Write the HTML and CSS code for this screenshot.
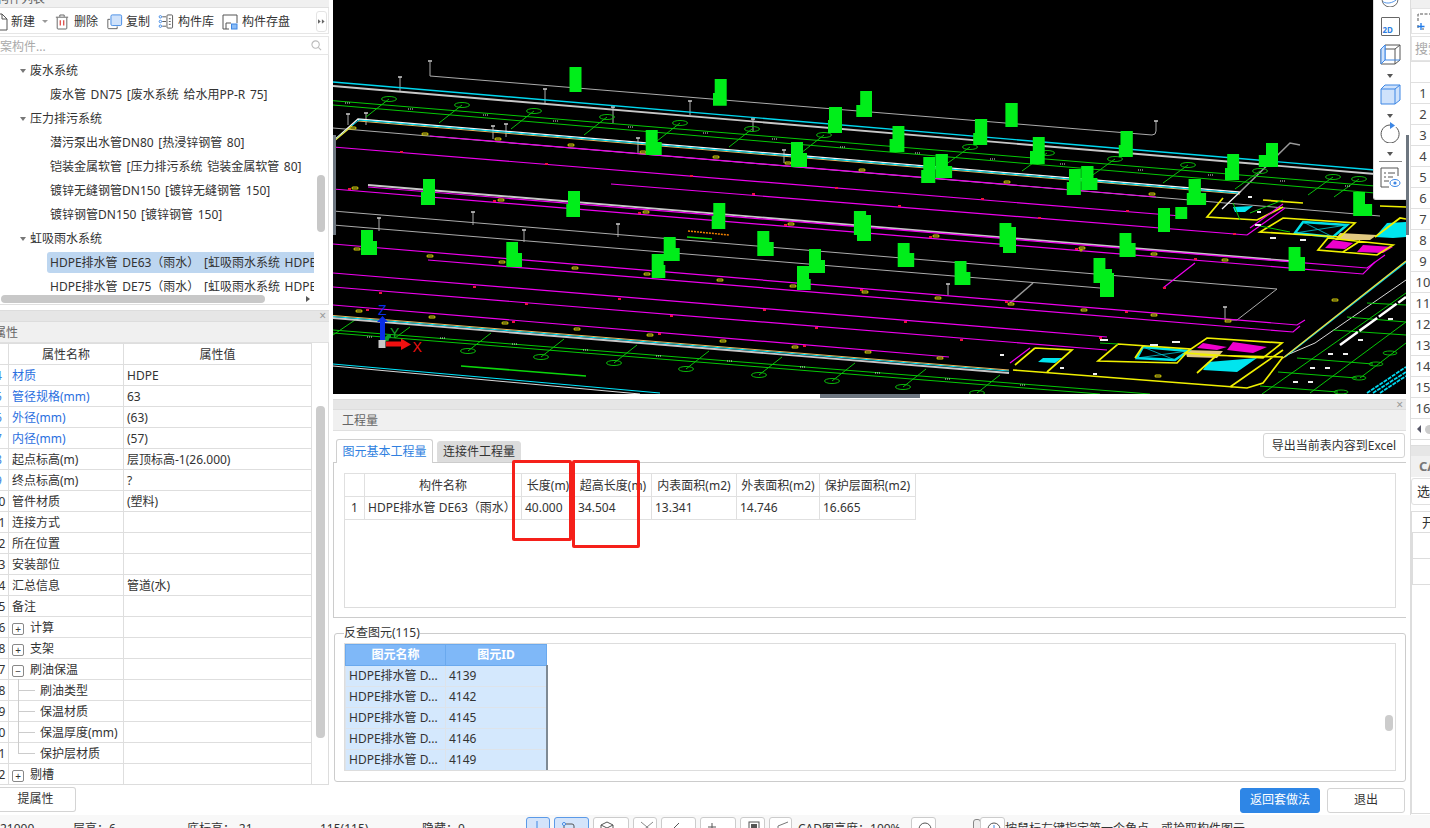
FILE: index.html
```html
<!DOCTYPE html>
<html lang="zh-CN">
<head>
<meta charset="utf-8">
<title>工程量</title>
<link rel="stylesheet" href="styles.css">
</head>
<body>
<div class="app">
  <section class="left">
    <div class="cut-head"><span>构件列表</span></div>
    <div class="tools">
      <svg class="ic ic-file" viewBox="0 0 18 18"><path d="M3 1h8l5 5v11H3z M11 1v5h5" fill="none" stroke="#555"/></svg>
      <span class="tool-t">新建</span><span class="mini-caret"></span>
      <svg class="ic ic-trash" viewBox="0 0 16 18"><path d="M1 3.500h14M5.500 3V1h5v2M2.500 4v12a1 1 0 0 0 1 1h9a1 1 0 0 0 1-1V4" fill="none" stroke="#555"/><path d="M6 7v6M10 7v6" stroke="#d9322e" stroke-width="1.300"/></svg>
      <span class="tool-t">删除</span>
      <svg class="ic ic-copy" viewBox="0 0 18 18"><path d="M4 6H1.500v9.500a1 1 0 0 0 1 1H12V14" fill="none" stroke="#555"/><rect x="5" y="1" width="12" height="12" rx="1.500" fill="#cfe2fb" stroke="#3c86e4"/></svg>
      <span class="tool-t">复制</span>
      <svg class="ic ic-lib" viewBox="0 0 16 16"><rect x="9" y="1" width="6" height="14" rx="1" fill="none" stroke="#555"/><path d="M11 5h2M11 8h2M11 11h2" stroke="#555"/><circle cx="2" cy="3" r="1.300" fill="none" stroke="#3c86e4"/><circle cx="2" cy="8" r="1.300" fill="none" stroke="#3c86e4"/><circle cx="2" cy="13" r="1.300" fill="none" stroke="#3c86e4"/><path d="M4 3h4M4 8h4M4 13h4" stroke="#555"/></svg>
      <span class="tool-t">构件库</span>
      <svg class="ic ic-save" viewBox="0 0 16 16"><path d="M7 15H1V1h14v8" fill="none" stroke="#555"/><path d="M4 15V9h5" fill="none" stroke="#555"/><rect x="9.500" y="10" width="5.500" height="5" fill="#8bbcf5" stroke="#3c86e4"/></svg>
      <span class="tool-t">构件存盘</span>
      <span class="more"><svg viewBox="0 0 9 8" class="more-g"><path d="M0 1l3.500 3L0 7zM5 1l3.500 3L5 7z" fill="#666"/></svg></span>
    </div>
    <div class="search">
      <span>案构件...</span>
      <svg class="glass" viewBox="0 0 12 12"><circle cx="5" cy="5" r="4" fill="none" stroke="#bbb" stroke-width="1.200"/><path d="M8 8l3 3" stroke="#bbb" stroke-width="1.200"/></svg>
    </div>
    <div class="tree">
      <div class="rows">
        <div class="cat"><i class="caret"></i>废水系统</div>
        <div class="leaf"><span>废水管 DN75 [废水系统 给水用PP-R 75]</span></div>
        <div class="cat"><i class="caret"></i>压力排污系统</div>
        <div class="leaf"><span>潜污泵出水管DN80 [热浸锌钢管 80]</span></div>
        <div class="leaf"><span>铠装金属软管 [压力排污系统 铠装金属软管 80]</span></div>
        <div class="leaf"><span>镀锌无缝钢管DN150 [镀锌无缝钢管 150]</span></div>
        <div class="leaf"><span>镀锌钢管DN150 [镀锌钢管 150]</span></div>
        <div class="cat"><i class="caret"></i>虹吸雨水系统</div>
        <div class="leaf sel"><span>HDPE排水管 DE63（雨水） [虹吸雨水系统 HDPE排水管 63]</span></div>
        <div class="leaf"><span>HDPE排水管 DE75（雨水） [虹吸雨水系统 HDPE排水管 75]</span></div>
      </div>
      <div class="vtrack"><b></b></div>
      <div class="htrack"><b></b><i class="h-arrow"></i></div>
    </div>
    <div class="bar-x"><span class="x">×</span></div>
    <div class="title-row"><span class="cut-title">属性</span></div>
    <div class="attrs">
      <table class="attr-table">
        <colgroup><col class="c-num"><col class="c-name"><col class="c-val"></colgroup>
        <thead><tr><th></th><th>属性名称</th><th>属性值</th></tr></thead>
        <tbody>
          <tr class="blue"><td class="n">4</td><td>材质</td><td>HDPE</td></tr>
          <tr class="blue"><td class="n">5</td><td>管径规格(mm)</td><td>63</td></tr>
          <tr class="blue"><td class="n">6</td><td>外径(mm)</td><td>(63)</td></tr>
          <tr class="blue"><td class="n">7</td><td>内径(mm)</td><td>(57)</td></tr>
          <tr class="num-blue"><td class="n">8</td><td>起点标高(m)</td><td>层顶标高-1(26.000)</td></tr>
          <tr class="num-blue"><td class="n">9</td><td>终点标高(m)</td><td>?</td></tr>
          <tr><td class="n">10</td><td>管件材质</td><td>(塑料)</td></tr>
          <tr><td class="n">11</td><td>连接方式</td><td></td></tr>
          <tr><td class="n">12</td><td>所在位置</td><td></td></tr>
          <tr><td class="n">13</td><td>安装部位</td><td></td></tr>
          <tr><td class="n">14</td><td>汇总信息</td><td>管道(水)</td></tr>
          <tr><td class="n">15</td><td>备注</td><td></td></tr>
          <tr><td class="n">16</td><td><i class="exp">+</i>计算</td><td></td></tr>
          <tr><td class="n">18</td><td><i class="exp">+</i>支架</td><td></td></tr>
          <tr><td class="n">27</td><td><i class="exp">−</i>刷油保温</td><td></td></tr>
          <tr><td class="n">28</td><td class="kid">刷油类型</td><td></td></tr>
          <tr><td class="n">29</td><td class="kid">保温材质</td><td></td></tr>
          <tr><td class="n">30</td><td class="kid">保温厚度(mm)</td><td></td></tr>
          <tr><td class="n">31</td><td class="kid last">保护层材质</td><td></td></tr>
          <tr><td class="n">32</td><td><i class="exp">+</i>剔槽</td><td></td></tr>
        </tbody>
      </table>
      <div class="attr-track"><b></b></div>
    </div>
    <div class="attr-foot"><button class="btn btn-prop">提属性</button></div>
  </section>

  <section class="center">
    <div class="viewport">
      <svg class="cad" viewBox="333 0 1073 394" xmlns="http://www.w3.org/2000/svg">
        <defs>
          <path id="ovals" d="M353 188h4M499 200h4M644 212h4M789 224h4M423 134h4M496 139h4M569 145h4M641 152h4M714 157h4M786 163h4M351 128h4M355 249h4M428 256h4M500 262h4M573 268h4M645 274h4M718 280h4M791 286h4M357 311h4M430 317h4M503 323h4M575 329h4M648 335h4M721 341h4M793 347h4M860 170h4M1005 182h4M1150 194h4M1080 248h4M1152 254h4M1223 260h4M1081 250h0M934 236h4M863 292h4M1009 304h4M1082 310h4M1152 315h4M1226 321h4M936 298h4M866 352h4M938 358h4M1333 300h4M1156 376h4"/>
        </defs>
        <rect x="333" y="0" width="1073" height="394" fill="#000"/>
        <g class="gr">
          <path d="M430 62V76L1152 135Q1156 135 1156 131V121"/>
          <path d="M400 77V91M545 89V103M690 101V115M613 107V123M348 114V125M366 113V125M493 126V139M506 124V137M638 138V153M753 119V132M784 150V163M379 218V231M473 212V225M524 230V242M618 224V237M948 284V295M1225 307V320"/>
          <path d="M333 128L1380 216"/>
          <path d="M333 211L1277 289L1237 320H1225"/>
          <path d="M333 225L1100 288"/>
          <path class="thick" d="M1033 283L1010 303"/>
          <path class="thick" d="M1240 192L1290 143L1300 145"/>
        </g>
        <path class="stem-cap" d="M428 61h4M398 77h4M543 89h4M688 101h4M611 107h4M346 114h4M364 113h4M491 126h4M504 124h4M636 138h4M751 119h4M782 150h4M377 218h4M471 212h4M522 230h4M616 224h4M946 284h4M1223 307h4M1154 121h4"/>
        <path class="cy2" d="M333 82L1375 170"/>
        <path class="gr2" d="M333 86L1375 174"/>
        <path class="gn" d="M333 100.700L1375 186M333 105L1375 193M333 330L1150 394M333 333L1100 394"/>
        <g class="axis">
          <ellipse cx="389" cy="99" rx="7.500" ry="2.500"/><ellipse cx="462" cy="105" rx="7.500" ry="2.500"/><ellipse cx="534" cy="111" rx="7.500" ry="2.500"/><ellipse cx="607" cy="117" rx="7.500" ry="2.500"/><ellipse cx="680" cy="123" rx="7.500" ry="2.500"/><ellipse cx="752" cy="129" rx="7.500" ry="2.500"/><ellipse cx="824" cy="135" rx="7.500" ry="2.500"/><ellipse cx="970" cy="147" rx="7.500" ry="2.500"/><ellipse cx="1047" cy="153" rx="7.500" ry="2.500"/><ellipse cx="1115" cy="159" rx="7.500" ry="2.500"/><ellipse cx="1188" cy="165" rx="7.500" ry="2.500"/><ellipse cx="1260" cy="171" rx="7.500" ry="2.500"/><ellipse cx="1333" cy="177" rx="7.500" ry="2.500"/><ellipse cx="1359" cy="179" rx="7.500" ry="2.500"/>
          <ellipse cx="468" cy="351" rx="7.500" ry="2.500"/><ellipse cx="541" cy="357" rx="7.500" ry="2.500"/><ellipse cx="614" cy="363" rx="7.500" ry="2.500"/><ellipse cx="686" cy="369" rx="7.500" ry="2.500"/><ellipse cx="759" cy="375" rx="7.500" ry="2.500"/><ellipse cx="832" cy="381" rx="7.500" ry="2.500"/><ellipse cx="903" cy="387" rx="7.500" ry="2.500"/><ellipse cx="977" cy="393" rx="7.500" ry="2.500"/>
          <path d="M389 99L366 117M462 105L439 123M534 111L511 129M607 117L584 135M680 123L657 141M752 129L729 147M824 135L801 153M970 147L945 165M1047 153L1022 171M1115 159L1090 177M1188 165L1163 183M1260 171L1235 189M1333 177L1308 195M1359 179L1334 197M468 351L491 333M541 357L564 339M614 363L637 345M686 369L709 351M759 375L782 357M832 381L855 363M903 387L926 369M977 393L1000 375M355 320L333 335M410 327L395 338"/>
        </g>
        <path class="gn3" d="M461 366L586 376"/>
        <path class="org" d="M358 121L1240 194"/>
        <path class="wh2" d="M333 141L358 119L1240 192L1222 209"/>
        <path class="cy1" d="M336 139L359 120L1238 193"/>
        <path class="ye1" d="M333 142L352 126"/>
        <path class="mg" d="M430 136L1156 197M333 147L1181 216M611 184L1247 235M333 189L1363 274L1375 262M333 244L1297 325L1305 320M428 260L1293 332L1300 326M333 273L1107 337M333 287L1107 350M333 305L949 357M1163 288L1195 263"/>
        <path class="gr2" d="M368 185L1290 261"/>
        <path class="mg" d="M368 187L1367 268L1385 255"/>
        <path class="gr2" d="M333 318L1009 373"/>
        <path class="cy1" d="M333 316.500L1009 371"/>
        <path class="org" d="M333 315.500L1009 370"/>
        <path class="cy1" d="M333 364L660 393"/>
        <path class="wh1" d="M333 366L640 394"/>
        <path class="tick" d="M345 103h6M408 109h6M483 115h6M553 121h6M628 127h6M703 133h6M772 139h6M840 147h6M915 153h6M990 159h6M1060 164h6M1138 170h6M1208 175h6M1280 181h6M1345 186h6M367 337h6M440 338h6M512 344h6M583 350h6M656 356h6M727 361h6M800 367h6M875 373h6M945 379h6M1020 385h6"/>
        <path class="red" d="M400 152h3M545 164h3M690 176h3M752 194h3M348 189h3M493 201h3M638 213h3M784 225h3M473 287h3M379 293h3M618 299h3M525 304h3M763 310h3M670 316h3M815 328h3M366 310h3M512 322h3M658 334h3M803 346h3M835 188h3M981 199h3M1126 211h3M898 206h3M1038 218h3M1233 234h3M929 237h3M1075 249h3M1194 259h3M860 290h3M1005 302h3M904 322h3M1125 312h3M960 340h3M1099 338h3M1163 288h3"/>
        <use href="#ovals" class="ov"/>
        <use href="#ovals" class="ov2"/>
        <path class="orgt" d="M688 231L729 235"/>
        <path class="gn3" d="M687 237L712 239"/>

        <!-- buildings -->
        <path class="fc" d="M1043 358L1062 358L1055 363L1038 362ZM1208 362L1257 358L1237 372L1203 370ZM1233 207L1253 206L1245 212L1235 212ZM1387 223L1406 222V237L1393 238L1375 237Z"/>
        <path class="fm" d="M1233 342L1267 347L1253 353L1227 350ZM1203 343L1227 347L1217 350L1197 348ZM1333 240L1353 243L1345 249L1325 248ZM1363 245L1393 247L1383 253L1357 252Z"/>
        <path class="ft" d="M1185 350L1223 351L1217 358L1187 357ZM1340 233L1377 235L1370 240L1335 240Z"/>
        <path class="cyb" d="M1143 347L1188 351L1175 360L1137 358ZM1303 222L1347 225L1333 237L1295 233Z"/>
        <path class="cythin" d="M1143 347L1175 360M1188 351L1137 358M1303 222L1333 237M1347 225L1295 233"/>
        <path class="ye2" d="M1035 348L1072 350L1047 372M1035 348L1015 365M1013 370L1247 388L1263 383L1283 357M1118 344L1190 349L1177 363L1098 361ZM1143 346L1135 358M1207 338L1282 343L1263 358L1185 353ZM1200 355L1283 357M1197 373L1217 355M1230 387L1283 350M1223 198L1207 217L1257 220L1283 207M1263 200L1303 203M1283 218L1355 223L1340 237L1260 232ZM1328 238L1393 245L1377 255L1318 250ZM1375 237L1400 218L1406 219M1360 241L1343 252M1406 207L1380 206"/>
        <path class="mg" d="M1010 363L1030 348M1250 228L1283 204M1247 235L1285 208"/>
        <path class="gn" d="M1233 203L1240 220M1250 213L1283 200M1255 225L1290 232M1100 343L1118 344"/>
        <path class="tick2" d="M1100 340h8M1150 345h8M1172 342h8M1255 225h6M1270 238h6M1300 240h6M1000 355h4M1060 368h4M1093 374h4M1257 212h4M1248 197h4"/>
        <path class="wh1" d="M1287 355L1315 343L1406 280"/>
        <path class="cy2" d="M1285 357L1406 262"/>
        <path class="ye1" d="M1283 358L1406 261"/>
        <path class="gn" d="M1333 330L1406 335M1297 358L1373 364M1278 372L1357 378M1260 386L1338 392M1347 317L1406 322M1367 303L1406 305M1406 293L1262 394M1406 322L1310 393M1406 343L1360 378"/>
        <path class="wh3" d="M1340 345L1406 297"/>
        <g class="axis"><ellipse cx="1390" cy="353" rx="7" ry="2"/><ellipse cx="1376" cy="364" rx="7" ry="2"/><ellipse cx="1359" cy="378" rx="7" ry="2"/><ellipse cx="1341" cy="392" rx="7" ry="2"/></g>
        <path class="tick2" d="M1328 354h5M1343 354h5M1310 368h5M1325 368h5M1293 382h5M1308 382h5M1358 340h5M1388 319h5"/>
        <path class="cy3" d="M1367 393L1406 367M1373 393L1406 372M1380 393L1406 376"/>

        <path class="grn" d="M569.500 67H581.500V92H569.500ZM714.700 79H726.700V105.700H713V93H714.700ZM829 107H842V133H828V120H829ZM860.200 91H872V117H856.300V105H860.200ZM1005.400 103H1017.700V127H1005.400ZM892.500 126H904.400V152H889.600V139H892.500ZM974.900 119H987.200V145H973.200V133H974.900ZM1120.500 131H1132.800V157H1118.800V145H1120.500ZM1032.800 137H1044.700V164H1030V151H1032.800ZM1266 143H1278V167H1258.800V155H1266ZM1227.200 154H1239.100V180H1225V168H1227.200ZM923.300 157H935.300V183H921.200V170H923.300ZM935.600 154H947.900V166H952.100V178H935.600ZM1069 169H1080.900V195H1066.800V182H1069ZM1081.200 166H1093.500V178H1097.400V190H1081.200ZM1188.600 179H1200.900V193H1206.100V205H1186.800V193H1188.600ZM1175.300 207H1187.200V219H1175.300ZM1158 208H1170V232H1158ZM1353.200 192H1365V204H1372.100V216H1353.200ZM853.900 211H866.100V215H871V241H857V235H853.900ZM999.500 223H1011.400V227H1016V253H1003V247H999.500ZM1119.500 233H1131.400V243H1135.600V257H1119.500ZM897.700 243H909.600V253H914.200V267H897.700ZM954.600 261H966.500V272H970.400V285H954.600ZM1093.500 258H1105.400V269H1112V273H1114V297H1100V283H1093.500ZM1288.600 247H1300.500V257H1305V271H1288.600ZM423 179H435V205H421V192H423ZM568 191H580V217H566.300V204H568ZM713.300 203H725.300V229H711.700V216H713.300ZM361 230H373V241H377V255H361ZM506.300 242H518V253H522V267H506.300ZM663.700 237H675.700V248H679.700V261H663.700ZM651.700 254H663.700V265H665.300V278H651.700ZM757.300 231H769.300V242H773.700V256H757.300ZM809 249H821V260H825V273H809ZM797 266H809V279H810.700V290H797ZM645.700 130H657.700V142H661.700V155H645.700ZM791 142H803V153H807V167H791Z"/>

        <g class="triad">
          <path d="M382.500 341V321" stroke="#0a2ee6" stroke-width="5"/>
          <path d="M377 322L382.500 316L388 322Z" fill="#0a2ee6"/>
          <path d="M386 344H404" stroke="#f01010" stroke-width="5"/>
          <path d="M401 338.500L411 344.500L401 350Z" fill="#f01010"/>
          <path d="M387 341Q386 336 391 336" stroke="#0ea02a" stroke-width="4" fill="none"/>
          <rect x="378.500" y="340" width="7" height="8" fill="#c8c8c8"/>
          <text class="tz" x="378" y="315">Z</text>
          <text class="ty" x="390" y="338">Y</text>
          <text class="tx" x="412.500" y="352">X</text>
        </g>
      </svg>

      <div class="floatbar">
        <svg class="fb fb-top" viewBox="0 0 20 8"><path d="M1 0a9 8 0 0 0 18 0" fill="none" stroke="#555"/><path d="M2 2c5 3 11 1 15-2" fill="none" stroke="#3c86e4"/></svg>
        <span class="fb-2d">2D</span>
        <svg class="fb fb-c" viewBox="0 0 21 21"><path d="M5 1h15v15l-5 4H1V5zM1 5h14v15M15 5l5-4" fill="none" stroke="#555"/><path d="M5 1v15H1M5 16h15" fill="none" stroke="#3c86e4"/><path d="M1 5v15l4-4V1z" fill="#cfe2fb" stroke="#3c86e4"/></svg>
        <i class="down"></i>
        <svg class="fb fb-c" viewBox="0 0 21 21"><path d="M5 1h15v15l-5 4H1V5z" fill="#cfe2fb" stroke="#3c86e4"/><path d="M1 5h14v15M15 5l5-4" fill="none" stroke="#3c86e4"/></svg>
        <i class="down"></i>
        <svg class="fb fb-c fb-rot" viewBox="0 0 21 21"><path d="M10 3a9 9 0 1 0 6 2.200" fill="none" stroke="#555"/><path d="M10 0l5 3.500L10 7z" fill="#3c86e4"/></svg>
        <i class="down"></i>
        <hr class="fb-sep">
        <svg class="fb fb-c" viewBox="0 0 21 21"><path d="M18 9V1H1v19h8" fill="none" stroke="#555"/><path d="M4 6h2M8 6h7M4 10h2M8 10h5M4 14h5" stroke="#555"/><ellipse cx="15" cy="16" rx="5" ry="3.500" fill="none" stroke="#3c86e4"/><circle cx="15" cy="16" r="1.600" fill="#3c86e4"/></svg>
      </div>
      <span class="split-l"></span>
    </div>
    <div class="split-b"><span class="handle"></span></div>

    <div class="bar-x center-bar"><span class="x">×</span></div>
    <div class="title-row"><span class="title-t">工程量</span></div>

    <div class="tabhead">
      <span class="tab on">图元基本工程量</span>
      <span class="tab off">连接件工程量</span>
      <button class="btn btn-export">导出当前表内容到Excel</button>
    </div>
    <div class="tabpane">
      <div class="qbox">
        <table class="q-table">
          <colgroup><col class="q0"><col class="q1"><col class="q2"><col class="q3"><col class="q4"><col class="q5"><col class="q6"></colgroup>
          <thead><tr><th></th><th>构件名称</th><th>长度(m)</th><th>超高长度(m)</th><th>内表面积(m2)</th><th>外表面积(m2)</th><th>保护层面积(m2)</th></tr></thead>
          <tbody><tr><td class="ctr">1</td><td class="nowrap">HDPE排水管 DE63（雨水）</td><td>40.000</td><td>34.504</td><td>13.341</td><td>14.746</td><td>16.665</td></tr></tbody>
        </table>
      </div>
    </div>

    <fieldset class="lookup">
      <legend>反查图元(115)</legend>
      <div class="lbox">
        <table class="l-table">
          <colgroup><col class="l1"><col class="l2"></colgroup>
          <thead><tr><th>图元名称</th><th>图元ID</th></tr></thead>
          <tbody>
            <tr><td>HDPE排水管 D...</td><td>4139</td></tr>
            <tr><td>HDPE排水管 D...</td><td>4142</td></tr>
            <tr><td>HDPE排水管 D...</td><td>4145</td></tr>
            <tr><td>HDPE排水管 D...</td><td>4146</td></tr>
            <tr><td>HDPE排水管 D...</td><td>4149</td></tr>
          </tbody>
        </table>
        <span class="l-thumb"></span>
      </div>
    </fieldset>

    <div class="actions">
      <button class="btn btn-primary">返回套做法</button>
      <button class="btn btn-exit">退出</button>
    </div>

    <span class="mark mark-a"></span>
    <span class="mark mark-b"></span>
  </section>

  <section class="right">
    <span class="split-r"></span>
    <div class="r-inner">
      <div class="r-cut"></div>
      <div class="r-tools">
        <svg class="r-ic" viewBox="0 0 18 18"><path d="M1 8V1h14v7M1 12v3M5 16h2" fill="none" stroke="#555" stroke-dasharray="3 1.500"/><path d="M4 10v7M0.500 13.500h7" stroke="#1f7ae8" stroke-width="1.300"/></svg>
      </div>
      <div class="r-search">搜索</div>
      <div class="r-table">
        <div class="r-h"></div>
        <div>1</div><div>2</div><div>3</div><div>4</div><div>5</div><div>6</div><div>7</div><div>8</div><div>9</div><div>10</div><div>11</div><div>12</div><div>13</div><div>14</div><div>15</div><div>16</div>
        <div class="r-scroll"><i class="l-arrow"></i><b></b></div>
      </div>
      <div class="r-bar"></div>
      <div class="r-title">CAD</div>
      <div class="r-sel">选择</div>
      <div class="r-list">
        <div class="r-lh">开关</div>
        <div class="r-lr"><i></i></div>
        <div class="r-lr"><i></i></div>
      </div>
    </div>
  </section>

  <footer class="status">
    <div class="st-info">
      <span class="s1">21000</span><span class="s2">层高：6</span><span class="s3">底标高：-21</span><span class="s4">115(115)</span><span class="s5">隐藏：0</span>
    </div>
    <div class="st-btns">
      <span class="sb w24 act"><svg viewBox="0 0 12 12"><path d="M3 0v11h7" fill="none" stroke="#3c86e4"/></svg></span>
      <span class="sb w35 act"><svg viewBox="0 0 14 12"><rect x="3" y="3" width="10" height="9" rx="2" fill="none" stroke="#555"/><circle cx="3" cy="3" r="1.500" fill="#fff" stroke="#3c86e4"/></svg></span>
      <span class="sb w36"><svg viewBox="0 0 14 12"><path d="M7 1l6 3v8H1V4zM1 4l6 3 6-3M7 7v5" fill="none" stroke="#555"/></svg></span>
      <span class="sb w24"><svg viewBox="0 0 14 12"><path d="M1 1l12 10M13 1L1 11" fill="none" stroke="#888"/></svg></span>
      <span class="sb w35"><svg viewBox="0 0 14 12"><path d="M2 11L11 2" fill="none" stroke="#555"/></svg></span>
      <span class="sb w36"><svg viewBox="0 0 14 12"><path d="M5 2v8M1 6h8" fill="none" stroke="#555"/></svg></span>
      <span class="sb w25"><svg viewBox="0 0 14 12"><rect x="2" y="1" width="10" height="11" fill="none" stroke="#555"/><rect x="4" y="3" width="6" height="8" fill="#555"/></svg></span>
      <span class="sb w23"><svg viewBox="0 0 14 12"><path d="M2 5V12M2 5l10-4" fill="none" stroke="#777"/></svg></span>
      <span class="st-text lum">CAD图亮度：100%</span>
      <span class="sb w25 rnd"><svg viewBox="0 0 14 12"><circle cx="7" cy="8" r="6" fill="none" stroke="#555"/></svg></span>
      <span class="slider"></span>
      <span class="sb w25 tip"><svg viewBox="0 0 14 12"><circle cx="7" cy="8" r="6" fill="none" stroke="#555"/><path d="M7 4v5" stroke="#3c86e4"/></svg></span>
      <span class="st-text hint">按鼠标左键指定第一个角点，或拾取构件图元</span>
    </div>
  </footer>
</div>
</body>
</html>
```

FILE: styles.css
```css
* { box-sizing: border-box; }
html, body { margin: 0; padding: 0; background: #fff; }
body { font: 12px/1.2 "Noto Sans", "Noto Sans CJK SC", sans-serif; color: #333; }
.app {
  width: 1430px; height: 828px; overflow: hidden; position: relative;
  display: grid; grid-template-columns: 333px 1073px 24px; grid-template-rows: 815px 13px;
}

/* ---------- left ---------- */
.left { width: 329px; display: flex; flex-direction: column; overflow: hidden; }
.cut-head { height: 8px; background: #f0f0f0; border-bottom: 1px solid #e0e0e0; overflow: hidden; color: #666; }
.cut-head span { display: block; margin: -9px 0 0 -3px; line-height: 16px; }
.tools { height: 26px; padding-top: 2px; display: flex; align-items: center; border-bottom: 1px solid #e6e6e6; border-right: 1px solid #e6e6e6; position: relative; }
.tool-t { white-space: nowrap; padding-top: 2px; }
.ic { flex: none; display: block; }
.ic-file { width: 18px; height: 18px; margin-left: -9px; margin-right: 2px; }
.mini-caret { width: 0; height: 0; border: 3px solid transparent; border-top-color: #999; border-bottom: 0; margin: 0 7px 0 7px; }
.ic-trash { width: 14px; height: 16px; margin-right: 5px; }
.ic-copy { width: 17px; height: 16px; margin: 0 3px 0 8px; }
.ic-lib { width: 16px; height: 15px; margin: 0 4px 0 8px; }
.ic-save { width: 16px; height: 16px; margin: 0 4px 0 8px; }
.more { position: absolute; left: 316px; top: 3px; width: 11px; height: 21px; border: 1px solid #e4e4e4; border-radius: 3px; display: flex; align-items: center; justify-content: center; }
.more-g { width: 7px; height: 7px; }
.search { margin-top: 2px; height: 19px; padding-top: 3px; border: 1px solid #e6e6e6; border-left: 0; display: flex; align-items: center; justify-content: space-between; padding-right: 6px; color: #aaa; }
.glass { width: 11px; height: 11px; margin-top: -3px; }
.tree { height: 250px; border: 1px solid #e0e0e0; border-left: 0; border-top: 0; position: relative; display: grid; grid-template-columns: 314px 1fr; grid-template-rows: 237px 13px; }
.rows { overflow: hidden; padding-top: 3px; }
.cat, .leaf { height: 24px; display: flex; align-items: center; white-space: nowrap; }
.cat { padding: 2px 0 0 20px; }
.caret { width: 0; height: 0; border: 3.500px solid transparent; border-top: 4px solid #777; border-bottom: 0; margin-right: 4px; }
.leaf { padding-left: 47px; overflow: hidden; word-spacing: 1.500px; }
.leaf span { padding-left: 3px; line-height: 21px; height: 21px; display: block; flex: 1 0 auto; }
.leaf.sel span { background: #bdd6f0; border-radius: 3px 0 0 3px; }
.vtrack { padding: 120px 0 0 3px; }
.vtrack b { display: block; width: 8px; height: 57px; background: #c8c8c8; border-radius: 4px; }
.htrack { grid-column: 1 / 3; display: flex; align-items: center; padding: 0 0 0 1px; position: relative; }
.htrack b { display: block; width: 264px; height: 8px; background: #c8c8c8; border-radius: 4px; }
.h-arrow { width: 0; height: 0; border: 3.500px solid transparent; border-left: 4px solid #555; border-right: 0; margin-left: 41px; }
.bar-x { height: 12px; margin-top: 5px; background: #e6e6e6; border-top: 1px solid #ddd; border-bottom: 1px solid #ddd; position: relative; display: flex; justify-content: flex-end; }
.x { color: #999; font-size: 12px; line-height: 10px; padding-right: 3px; }
.title-row { height: 21px; padding-top: 2px; background: #f0f0f0; border-bottom: 1px solid #e0e0e0; display: flex; align-items: center; color: #666; flex: none; }
.cut-title { margin-left: -6px; }
.attrs { height: 442px; display: flex; overflow: hidden; border-bottom: 1px solid #ddd; border-right: 1px solid #ddd; }
.attr-table { flex: none; width: 323px; margin-left: -12px; border-collapse: collapse; table-layout: fixed; align-self: flex-start; }
.c-num { width: 20px; } .c-name { width: 115px; } .c-val { width: 188px; }
.attr-table th, .attr-table td { height: 21px; padding: 2px 0 0 3px; border: 1px solid #dedede; font-weight: 400; white-space: nowrap; position: relative; line-height: 16px; }
.attr-table th { text-align: center; padding: 2px 0 0; }
.attr-table td.n { padding: 2px 0 0; text-align: center; }
.blue td:nth-child(2) { color: #2b6fe0; }
.blue td.n, .num-blue td.n { color: #3c86e4; }
.exp { display: inline-block; width: 12px; height: 12px; border: 1px solid #888; border-radius: 2px; margin: 0 6px 0 0; font-style: normal; font-size: 10px; line-height: 10px; text-align: center; vertical-align: -1px; }
.attr-table td.kid { padding-left: 31px; }
.kid::before { content: ""; position: absolute; left: 9px; top: -1px; bottom: -1px; width: 0; border-left: 1px solid #ccc; }
.kid.last::before { bottom: 10px; }
.kid::after { content: ""; position: absolute; left: 9px; top: 10px; width: 17px; border-top: 1px solid #ccc; }
.attr-track { width: 16px; padding: 63px 0 0 4px; flex: 1; }
.attr-track b { display: block; width: 9px; height: 332px; background: #ccc; border-radius: 4px; }
.attr-foot { margin-top: 2px; }
.btn { font: inherit; color: #333; background: #fff; border: 1px solid #d4d4d4; border-radius: 3px; padding: 0; cursor: default; }
.btn-prop { width: 76px; height: 25px; display: block; border-left: 0; border-radius: 0 3px 3px 0; padding-right: 4px; }

/* ---------- center ---------- */
.center { position: relative; display: flex; flex-direction: column; overflow: hidden; width: 1073px; grid-column: 2; grid-row: 1; }
.viewport { height: 394px; position: relative; flex: none; }
.cad { display: block; width: 1073px; height: 394px; }
.gr, .gn, .mg, .cy1, .cy2, .cy3, .gr2, .wh1, .wh2, .wh3, .ye1, .ye2, .org, .orgt, .gn3, .cyb, .cythin { fill: none; }
.gr path { fill: none; stroke: #ababab; stroke-width: 1; }
.gr path.thick { stroke-width: 1.500; stroke: #999; }
.stem-cap { stroke: #ccc; stroke-width: 1.500; fill: none; }
.cy1 { stroke: #00e8ff; stroke-width: 1; }
.cy2 { stroke: #00d8f0; stroke-width: 1.400; }
.cy3 { stroke: #00d8f0; stroke-width: 1.800; stroke-dasharray: 4 1; }
.gr2 { stroke: #c8c8c8; stroke-width: 1.900; }
.gn { stroke: #06c806; stroke-width: 1; }
.gn3 { stroke: #0bd80b; stroke-width: 1.600; }
.axis ellipse { fill: none; stroke: #0bb80b; stroke-width: 1; }
.axis path { fill: none; stroke: #0bc00b; stroke-width: 1; }
.mg { stroke: #ee00ee; stroke-width: 1.200; }
.org { stroke: #e8b860; stroke-width: 1; }
.orgt { stroke: #f08000; stroke-width: 1.500; stroke-dasharray: 2 1; }
.wh1 { stroke: #d8d8d8; stroke-width: 1; }
.wh2 { stroke: #f4f4f4; stroke-width: 1.300; }
.wh3 { stroke: #fff; stroke-width: 2.500; stroke-dasharray: 22 2; }
.ye1 { stroke: #f0e040; stroke-width: 1.300; }
.ye2 { stroke: #f0f000; stroke-width: 1.700; }
.fc { fill: #00e5ee; }
.fm { fill: #ee00cc; }
.ft { fill: #e0c880; }
.cyb { stroke: #00dfe8; stroke-width: 2.500; }
.cythin { stroke: #00c8d8; stroke-width: 0.800; }
.tick { stroke: #dcdcdc; stroke-width: 1.200; stroke-dasharray: 1 1; fill: none; }
.tick2 { stroke: #f0f0f0; stroke-width: 2; fill: none; }
.red { stroke: #f01040; stroke-width: 1.800; fill: none; }
.ov { stroke: #d8d000; stroke-width: 3; stroke-linecap: round; fill: none; }
.ov2 { stroke: #222; stroke-width: 1; stroke-linecap: round; fill: none; }
.grn { fill: #00ee1a; }
.triad text { font: 14px "Liberation Sans", sans-serif; }
.tz { fill: #0a2ee6; } .ty { fill: #19a52f; } .tx { fill: #f01010; }

.floatbar { position: absolute; right: 0; top: 0; width: 33px; height: 200px; background: #fff; border-radius: 0 0 0 3px; border-bottom: 1px solid #ddd; border-left: 1px solid #ddd; display: flex; flex-direction: column; align-items: center; }
.fb { display: block; flex: none; }
.fb-top { width: 20px; height: 7px; }
.fb-2d { width: 19px; height: 19px; margin-top: 10px; border: 1px solid #666; border-radius: 1px; color: #2f7fe0; font-size: 8px; font-weight: 700; line-height: 10px; padding-top: 7px; padding-left: 1px; }
.fb-c { width: 21px; height: 21px; }
.floatbar .fb-2d + .fb-c { margin-top: 8px; }
.fb-rot { margin-top: -2px; }
.down { width: 0; height: 0; border: 3.500px solid transparent; border-top: 4px solid #555; border-bottom: 0; margin: 9px 0 6px; flex: none; }
.fb-sep { width: 23px; margin: -1px 0 5px; border: 0; border-top: 1px solid #888; flex: none; }
.split-l { position: absolute; left: 0; top: 135px; width: 3px; height: 100px; background: #6d7680; }
.split-b { height: 4px; flex: none; position: relative; display: flex; justify-content: center; }
.handle { width: 100px; height: 4px; background: #6d7680; }
.center-bar { margin-top: 1px; height: 11px; flex: none; }
.title-t { margin-left: 9px; }
.tabhead { height: 31px; flex: none; position: relative; display: flex; align-items: flex-end; padding-left: 3px; gap: 4px; }
.tab { height: 23px; display: flex; align-items: center; justify-content: center; border-radius: 3px 3px 0 0; padding-top: 2px; }
.tab.on { width: 97px; color: #2f7fe0; border: 1px solid #d0d0d0; border-bottom: 0; background: #fff; position: relative; z-index: 1; margin-bottom: -1px; height: 24px; }
.tab.off { width: 84px; background: #dcdcdc; border: 1px solid #ddd; height: 21px; }
.btn-export { position: absolute; right: 1px; top: 2px; width: 142px; height: 25px; padding-top: 1px; }
.tabpane { height: 156px; flex: none; border: 1px solid #ccc; border-right: 0; padding: 10px 10px 0 10px; width: 1073px; }
.qbox { height: 135px; border: 1px solid #ddd; width: 1052px; }
.q-table { border-collapse: collapse; table-layout: fixed; width: 571px; margin: -1px 0 0 -1px; }
.q0 { width: 20px; } .q1 { width: 157px; } .q2 { width: 53px; } .q3 { width: 77px; } .q4 { width: 85px; } .q5 { width: 83px; } .q6 { width: 96px; }
.q-table th, .q-table td { border: 1px solid #e0e0e0; font-weight: 400; padding: 0 0 0 3px; white-space: nowrap; overflow: hidden; }
.q-table th { height: 23px; text-align: center; padding: 2px 0 0; }
.q-table td { height: 23px; }
.q-table td.ctr { text-align: center; padding: 0; }
.lookup { margin: 8px 0 0 1px; padding: 0 9px 9px; width: 1072px; height: 156px; border: 1px solid #ccc; border-radius: 3px; flex: none; }
.lookup legend { padding: 0; margin: 0; line-height: 14px; }
.lbox { height: 128px; margin-top: 3px; border: 1px solid #ddd; position: relative; overflow: hidden; }
.l-table { border-collapse: collapse; table-layout: fixed; width: 201px; }
.l1 { width: 100px; } .l2 { width: 101px; }
.l-table th { height: 21px; background: #7fb8f8; color: #fff; font-weight: 700; border: 1px solid #6aa9ee; padding: 1px 0 0; }
.l-table td { height: 21px; background: #d4e8fd; border: 1px solid #dde3ea; padding: 1px 0 0 3px; white-space: nowrap; overflow: hidden; }
.l-table td:last-child { border-right: 2px solid #7f8a94; }
.l-thumb { position: absolute; right: 2px; top: 71px; width: 8px; height: 16px; background: #ccc; border-radius: 4px; }
.actions { flex: 1; display: flex; justify-content: flex-end; gap: 7px; padding: 6px 1px 0 0; }
.btn-primary { width: 80px; height: 25px; background: #2e86e6; border-color: #2e86e6; color: #fff; }
.btn-exit { width: 78px; height: 25px; }
.mark { position: absolute; border: 3px solid #f5201a; border-radius: 2px; }
.mark-a { left: 179px; top: 460px; width: 60px; height: 81px; }
.mark-b { left: 239px; top: 460px; width: 68px; height: 88px; }

/* ---------- right ---------- */
.right { position: relative; overflow: hidden; grid-column: 3; grid-row: 1; padding-left: 4px; }
.split-r { position: absolute; left: 0; top: 135px; width: 3px; height: 100px; background: #6d7680; }
.r-inner { width: 70px; border-left: 1px solid #ddd; height: 815px; }
.r-cut { height: 8px; background: #f0f0f0; }
.r-tools { height: 26px; border: 1px solid #e4e4e4; padding: 4px 0 0 5px; }
.r-ic { width: 18px; height: 18px; display: block; }
.r-search { height: 25px; margin-top: 2px; border: 1px solid #e4e4e4; color: #aaa; line-height: 23px; padding-left: 3px; font-size: 13px; }
.r-table > div { height: 21px; border-bottom: 1px solid #e0e0e0; width: 24px; text-align: center; font-size: 13px; line-height: 20px; color: #444; }
.r-table { border-top: 1px solid #e0e0e0; }
.r-table > .r-h { height: 21px; }
.r-table > .r-scroll { width: 70px; height: 21px; display: flex; align-items: center; padding-left: 6px; border-bottom: 1px solid #ddd; }
.l-arrow { width: 0; height: 0; border: 4px solid transparent; border-right: 4px solid #556; border-left: 0; }
.r-scroll b { width: 9px; height: 9px; border-radius: 5px; background: #ccc; margin-left: 4px; }
.r-bar { height: 11px; margin-top: 5px; background: #e6e6e6; border-top: 1px solid #ddd; }
.r-title { height: 21px; background: #f0f0f0; font-weight: 700; color: #777; line-height: 21px; padding-left: 8px; font-size: 13px; }
.r-sel { height: 27px; margin-top: 1px; border: 1px solid #e0e0e0; border-radius: 3px; line-height: 25px; padding-left: 5px; font-size: 13px; }
.r-list { margin-top: 6px; height: 303px; border: 1px solid #ddd; }
.r-lh { height: 21px; line-height: 20px; padding-left: 10px; border-bottom: 1px solid #ddd; font-size: 13px; }
.r-lr { height: 26px; border-bottom: 1px solid #ddd; border-left: 1px solid #ddd; padding: 7px 0 0 18px; }
.r-lr i { display: block; width: 12px; height: 12px; border: 1px solid #bbb; }

/* ---------- status ---------- */
.status { grid-column: 1 / 4; grid-row: 2; background: #f8f8f8; overflow: hidden; display: flex; position: relative; }
.st-info { display: flex; width: 526px; padding-top: 7px; line-height: 14px; flex: none; white-space: nowrap; }
.s1 { width: 73px; } .s2 { width: 114px; } .s3 { width: 133px; } .s4 { width: 102px; }
.st-btns { display: flex; padding-top: 2px; align-items: flex-start; }
.sb { height: 24px; border: 1px solid #ccc; border-radius: 3px; background: #fff; margin-right: 4px; display: flex; align-items: flex-start; justify-content: flex-start; padding: 3px 0 0 6px; flex: none; }
.sb svg { width: 14px; height: 12px; display: block; }
.sb.act { background: #d4e4fa; border-color: #5b9ae8; }
.w24 { width: 24px; } .w35 { width: 35px; } .w36 { width: 36px; } .w25 { width: 25px; } .w23 { width: 23px; }
.st-text { white-space: nowrap; padding-top: 5px; line-height: 14px; flex: none; }
.lum { width: 113px; margin-left: 2px; }
.slider { width: 8px; height: 24px; margin: 2px -1px 0 33px; border: 1px solid #888; border-radius: 3px; background: #eee; flex: none; }
.tip { margin-right: 0; }
.hint { color: #333; }
```
